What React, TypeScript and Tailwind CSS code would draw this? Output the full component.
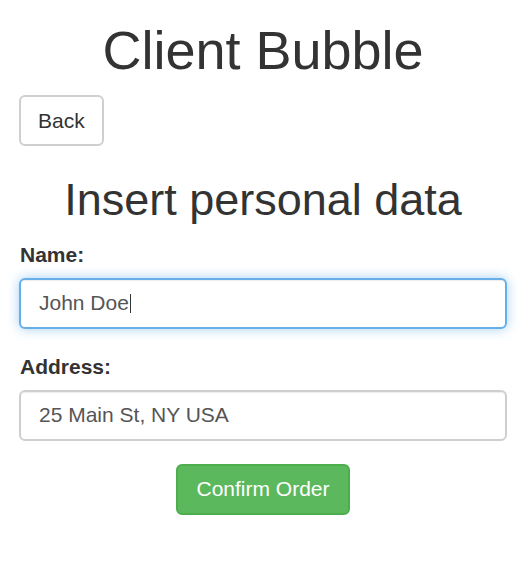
import React from "react";

export default function App() {
  return (
    <div className="min-h-[586px] bg-white pl-[19px] pr-[16px] font-['Liberation_Sans',Arial,Helvetica,sans-serif] text-[21px] leading-[30px] text-[#333]">
      <h1 className="pt-[21px] mb-[15px] text-center text-[54px] leading-[1.1] font-normal">
        Client Bubble
      </h1>
      <button
        type="button"
        className="h-[51px] px-[17px] rounded-[6px] border-2 border-[#cfcfcf] bg-white text-[21px] leading-[30px] text-[#333]"
      >
        Back
      </button>
      <h2 className="mt-[29px] mb-[15px] text-center text-[45px] leading-[1.1] font-normal">
        Insert personal data
      </h2>
      <div className="mb-[23px]">
        <label className="block font-bold mb-[8px] pl-[1px]">Name:</label>
        <div className="flex h-[51px] items-center rounded-[6px] border-2 border-[#66afe9] bg-white px-[18px] text-[#555] shadow-[inset_0_1px_1px_rgba(0,0,0,0.075),0_0_12px_rgba(102,175,233,0.6)]">
          <span>John Doe</span>
          <span className="ml-[1px] inline-block h-[19px] w-[1px] bg-[#333]" />
        </div>
      </div>
      <div className="mb-[23px]">
        <label className="block font-bold mb-[8px] pl-[1px]">Address:</label>
        <div className="flex h-[51px] items-center rounded-[6px] border-2 border-[#cfcfcf] bg-white px-[18px] text-[#555] shadow-[inset_0_1px_1px_rgba(0,0,0,0.075)]">
          <span>25 Main St, NY USA</span>
        </div>
      </div>
      <div className="flex justify-center">
        <button
          type="button"
          className="h-[51px] px-[18px] rounded-[6px] border-2 border-[#4cae4c] bg-[#5cb85c] text-[21px] leading-[30px] text-white"
        >
          Confirm Order
        </button>
      </div>
    </div>
  );
}
